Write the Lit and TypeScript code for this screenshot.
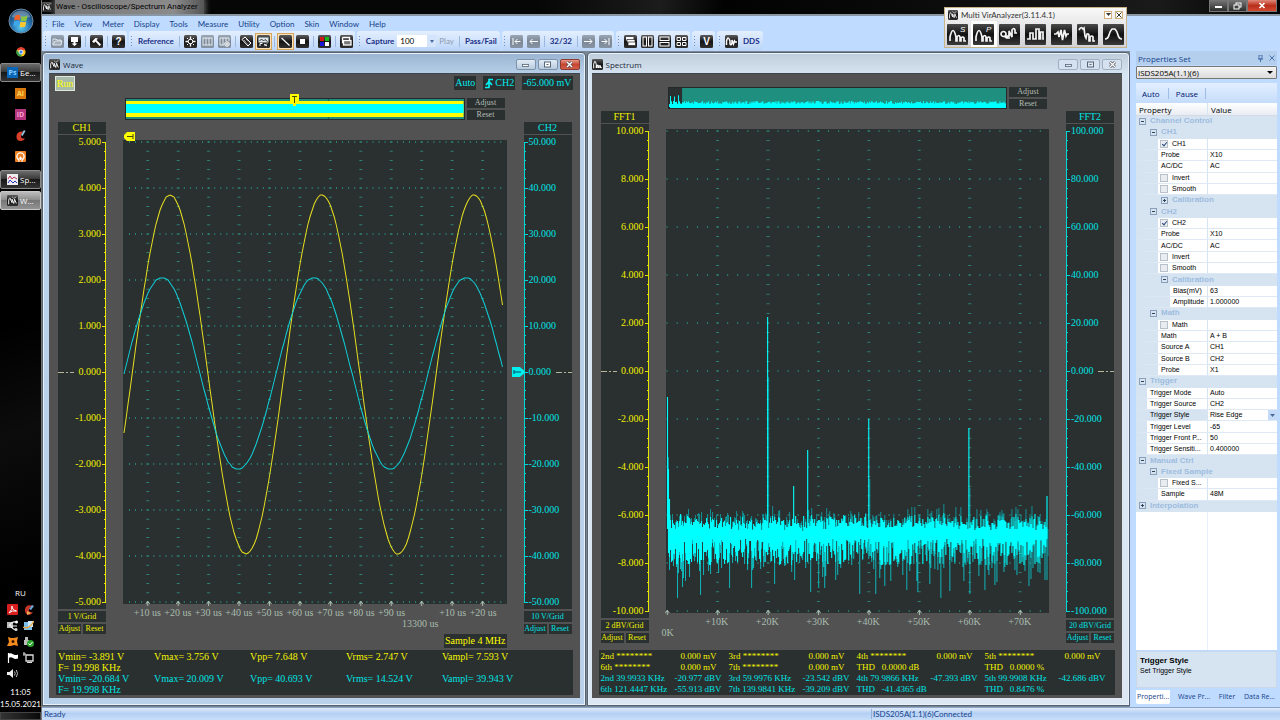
import { LitElement, html, svg, css, nothing } from "lit";
import { customElement, property } from "lit/decorators.js";
import { classMap } from "lit/directives/class-map.js";

/* ---------- shared drawing helpers ---------- */

const glyphs: Record<string, unknown> = {
  open: svg`<path d="M2 4h3l1 1h4v2M2 4v6h8l1-4H4l-2 4" fill="#d6dde6" fill-opacity=".45" stroke="#dfe6ee"/>`,
  save: svg`<rect x="3" y="2" width="7" height="5" fill="#fff"/><path d="M5.500 7h2v1.500h2L6.500 11 3.500 8.500h2z" fill="#fff"/>`,
  hammer: svg`<path d="M2 6.500L5.500 3 8 3.500 6.500 5 11 9.500 9.500 11 5.500 6.500 4 8z" fill="#fff"/>`,
  help: svg`<text x="6.500" y="10" text-anchor="middle" font-size="10" font-weight="700" font-family="Liberation Sans" fill="#fff">?</text>`,
  target: svg`<circle cx="6.500" cy="6.500" r="2.300" fill="none" stroke="#fff"/><path d="M6.500 1.500v3M6.500 8.500v3M1.500 6.500h3M8.500 6.500h3" stroke="#fff" stroke-width="1.300"/><path d="M3 3l1 1M10 3L9 4M3 10l1-1M10 10L9 9" stroke="#fff"/>`,
  bars: svg`<rect x="2" y="3" width="9" height="7" fill="none" stroke="#e8edf3"/><path d="M5 3v7M8 3v7" stroke="#e8edf3"/>`,
  barsPlus: svg`<path d="M8 3v3M5 3v7M2 3h9v3M2 3v7h4" fill="none" stroke="#e8edf3"/><circle cx="9" cy="9" r="2.300" fill="none" stroke="#fff"/><path d="M9 7.500v3M7.500 9h3" stroke="#fff"/>`,
  tag: svg`<path d="M2 4.500L5 2l6 6-3 3z" fill="none" stroke="#fff"/><path d="M4 5l4 4.500M6 4l4 4.500" stroke="#fff" stroke-width=".8" stroke-dasharray="1 .7"/>`,
  picture: svg`<path d="M1.500 2.500h10v5h-10z" fill="#dfe8ee"/><path d="M2.500 6l2-2 2 2 1.500-1.500L10.500 6.500" fill="none" stroke="#333"/><path d="M3 11V8.500h2.500M7 9l3 2M7.500 11L10 8.500" fill="none" stroke="#fff"/>`,
  line: svg`<path d="M2.500 3l8 7.500" stroke="#fff" stroke-width="1.100"/>`,
  stop: svg`<rect x="4" y="4" width="5" height="5" fill="#fff"/>`,
  palette: svg`<rect x="2" y="2" width="4" height="4" fill="#d01818"/><rect x="7" y="2" width="4" height="4" fill="#18b818"/><rect x="2" y="7" width="4" height="4" fill="#1818d8"/><rect x="7" y="7" width="4" height="4" fill="#fff"/>`,
  windows: svg`<path d="M2.500 2.500h7v3M2.500 2.500v5h2" fill="none" stroke="#fff" stroke-width="1.300"/><rect x="3.500" y="5.500" width="7.500" height="4.500" fill="#777" stroke="#fff" stroke-width="1.300"/>`,
  first: svg`<path d="M3 3v7M10.500 6.500H5M7.500 4L5 6.500 7.500 9" fill="none" stroke="#fff"/>`,
  prev: svg`<path d="M11 6.500H3M5.500 4L3 6.500 5.500 9" fill="none" stroke="#fff"/>`,
  next: svg`<path d="M2 6.500h8M7.500 4L10 6.500 7.500 9" fill="none" stroke="#fff"/>`,
  last: svg`<path d="M10 3v7M2.500 6.500H8M5.500 4L8 6.500 5.500 9" fill="none" stroke="#fff"/>`,
  cascade: svg`<rect x="2" y="2" width="7.500" height="3.500" fill="#fff"/><rect x="3" y="4.500" width="8" height="3" fill="#fff" stroke="#222" stroke-width=".7"/><rect x="4" y="7" width="7.500" height="3.500" fill="#fff" stroke="#222" stroke-width=".7"/>`,
  columns: svg`<rect x="2" y="2" width="3.500" height="9" fill="none" stroke="#fff"/><rect x="7.500" y="2" width="3.500" height="9" fill="none" stroke="#fff"/>`,
  rows: svg`<rect x="2" y="2" width="9" height="3.500" fill="none" stroke="#fff"/><rect x="2" y="7.500" width="9" height="3.500" fill="none" stroke="#fff"/>`,
  quad: svg`<path d="M2 2.500h3.500v3H2zM7.500 2.500H11v3H7.500zM2 7.500h3.500v3H2zM7.500 7.500H11v3H7.500z" fill="none" stroke="#fff"/>`,
  volt: svg`<text x="6.500" y="10" text-anchor="middle" font-size="10" font-weight="700" font-family="Liberation Sans" fill="#fff">V</text>`,
  dds: svg`<path d="M1.500 10V6Q3 0 5 6v3q1 2 2-1V5l1.500 4 1-3 .7 1H12" fill="none" stroke="#fff" stroke-width="1.500"/>`,
  wave: svg`<path d="M2 11V6Q3.500 1 4.500 6L6 9V5l2 5 1-5 2 5" fill="none" stroke="#fff" stroke-width="1.100"/><path d="M6 2l2 2 3-2" fill="none" stroke="#ccc"/>`,
  spectrum: svg`<path d="M2 11V6Q3.500 0 5 6v4h1V8q1-2 1.500 0v2h1V8.500q1-1.500 1.500 0V10h1.500" fill="none" stroke="#fff" stroke-width="1.200"/>`,
};

const tile = (name: string, size = 13, dim = false) => html`
  <svg width=${size} height=${size} viewBox="0 0 13 13" aria-hidden="true">
    <defs>
      <linearGradient id=${dim ? "td" : "tb"} x1="0" y1="0" x2="0" y2="1">
        <stop offset="0" stop-color=${dim ? "#9aa6b4" : "#5c5c5c"} />
        <stop offset=".5" stop-color=${dim ? "#7c8896" : "#161616"} />
        <stop offset="1" stop-color=${dim ? "#8794a4" : "#303030"} />
      </linearGradient>
    </defs>
    <rect width="13" height="13" rx="1.500" fill="url(#${dim ? "td" : "tb"})" />
    ${glyphs[name]}
  </svg>`;

/* Small deterministic generator so that the noise floor is stable. */
const randomSource = (seed: number) => () => {
  seed = (seed * 1664525 + 1013904223) >>> 0;
  return seed / 4294967296;
};

/* ---------- task bar ---------- */

@customElement("task-bar")
class TaskBar extends LitElement {
  static styles = css`
    :host {
      display: flex; flex-direction: column; width: 41px; color: #fff;
      background: linear-gradient(160deg, #000 0 45%, #0c0c0c 60%, #000 80%);
      font: 8px "Open Sans", sans-serif;
    }
    button { all: unset; box-sizing: border-box; display: flex; align-items: center; }
    .orb { height: 41px; justify-content: center; }
    .icon { height: 21px; justify-content: center; }
    .task {
      height: 19px; margin: 1px 0; padding-left: 6px; gap: 2px; overflow: hidden; white-space: nowrap;
      border: 1px solid #8a8a8a; border-radius: 2px;
      background: linear-gradient(#6c6c6c, #3b3b3b 45%, #181818 50%, #333);
    }
    .near { margin-top: 3px; }
    .on { background: linear-gradient(#bdbdbd, #8f8f8f 45%, #777 50%, #939393); border-color: #c8c8c8; }
    .spacer { flex: 1; }
    .lang, .clock { text-align: center; line-height: 12px; }
    .clock { font-family: Lato, sans-serif; }
    .tray { display: grid; grid-template-columns: 16px 16px; justify-content: center; row-gap: 5px; padding: 5px 0 7px; }
    .tray svg { display: block; margin: auto; }
    .peek { height: 8px; margin-top: 2px; border: 1px solid #444; background: linear-gradient(90deg, #333, #0a0a0a); }
  `;
  private tray() {
    return [
      svg`<rect width="11" height="11" rx="1" fill="#d81e1e"/><path d="M2 9Q6 5 5 2q0 4 4.500 5Q5 6 2 9" fill="none" stroke="#fff"/>`,
      svg`<path d="M9 1.500Q3 0 2 5t4 6q3-.5 4-3-3 1-4-1t3-5.500" fill="#c8362a"/><path d="M6 5l3-4 2 1-3 4z" fill="#6fa7d8"/><path d="M4 7l4 2-4 2z" fill="#e8b04a"/>`,
      svg`<path d="M0 2h6v6H0z" fill="#bbb"/><path d="M2 6q3-5 7-4M4 6h6M3 5q2 4 6 5" fill="none" stroke="#eee" stroke-width="1.200"/><circle cx="9.500" cy="2" r="1.500" fill="#fff"/><circle cx="9" cy="9.500" r="1.500" fill="#ddd"/>`,
      svg`<rect x="1" y="2" width="8" height="8" fill="#7fc0ee"/><path d="M5 1h5v6H5z" fill="#cfe9fb"/><path d="M0 7q6 3 11-6" fill="none" stroke="#f0a030" stroke-width="1.300"/>`,
      svg`<path d="M1 1l3 1 3 0 4-1-1 4 1 5-4-1-3 1-4 0 2-4z" fill="#f58a1e"/><circle cx="6" cy="5.500" r="1.500" fill="#3a1800"/>`,
      svg`<path d="M2 1h3v3h1v5H1V4h1z" fill="#bbb"/><circle cx="7.500" cy="7.500" r="3.500" fill="#2aa52a"/><path d="M5.500 7.500L7 9l2.500-3" fill="none" stroke="#fff"/>`,
      svg`<path d="M1.500 1v10" stroke="#fff" stroke-width="1.200"/><path d="M2 1.500q2-1 4 .8 2 1.500 5 .2v4q-3 1-5-.5-2-1.200-4-.3z" fill="#fff"/>`,
      svg`<path d="M3 3h7v6H3z" fill="none" stroke="#ddd" stroke-width="1.300"/><path d="M1 0v4M0 2h3M4 10.500h5" stroke="#ddd"/>`,
      svg`<path d="M0 4h2.500L6 1v9L2.500 7H0z" fill="#eee"/><path d="M7.500 3.500q1.500 2 0 4M9.300 2q2.500 3.500 0 7" fill="none" stroke="#bbb"/>`,
    ];
  }
  private app(label: string, fill: string, ink: string) {
    return html`<svg width="11" height="11" viewBox="0 0 11 11" aria-hidden="true">
      <rect width="11" height="11" fill=${fill} />
      <text x="5.500" y="8" text-anchor="middle" font-size="7" font-weight="700" font-family="Open Sans" fill=${ink}>${label}</text></svg>`;
  }
  render() {
    return html`
      <button class="orb" aria-label="Start">
        <svg width="26" height="26" viewBox="0 0 26 26">
          <defs><radialGradient id="o" cx=".5" cy=".75" r=".7">
            <stop offset="0" stop-color="#5fd0f0" /><stop offset=".5" stop-color="#2a78b8" /><stop offset="1" stop-color="#173a62" />
          </radialGradient></defs>
          <circle cx="13" cy="13" r="12" fill="url(#o)" stroke="#6d8ba4" />
          <path d="M3.500 9Q6 2.500 13 2.500T22.500 9Q13 12 3.500 9" fill="#fff" opacity=".3" />
          <path d="M7 8q3-2 5.500-.5l-.8 5Q9 11 6 12.500z" fill="#f0642c" />
          <path d="M13.500 8q3 1.300 6-.5l-1 5q-3 1.500-5.800 0z" fill="#8cc63e" />
          <path d="M6 13.500q3-1.500 5.600 0l-.8 5q-3-1.500-5.500 0z" fill="#3fa8e8" />
          <path d="M12.500 13.500q3 1.500 5.800 0l-1 5q-3 1.500-5.700 0z" fill="#fdc82f" />
        </svg>
      </button>
      <button class="icon" aria-label="Browser">
        <svg width="10" height="10" viewBox="0 0 12 12">
          <circle cx="6" cy="6" r="5.500" fill="#fbc21c" />
          <path d="M1 3.500A5.500 5.500 0 0 1 11.200 4H6z" fill="#e33b2e" />
          <path d="M1 3.500A5.500 5.500 0 0 0 5.500 11.500L8 7.500 4 7z" fill="#2ca24c" />
          <circle cx="6" cy="6" r="2.400" fill="#4285f4" stroke="#fff" />
        </svg>
      </button>
      <button class="task">${this.app("Ps", "#0a67b8", "#8fd0ff")}<span>Бе...</span></button>
      <button class="icon" aria-label="Illustrator">${this.app("Ai", "#d9780c", "#ffd65a")}</button>
      <button class="icon" aria-label="InDesign">${this.app("ID", "#b3347c", "#ff9fd0")}</button>
      <button class="icon" aria-label="Cleaner">
        <svg width="11" height="11" viewBox="0 0 11 11"><path d="M8 1.500Q2 1 1.500 6t4.500 5q3-.2 4-2.500-3.500.5-4-1.500T8 1.500" fill="#d9402c" /><path d="M6 5l3-5 1.500 1L7.500 6z" fill="#9cc4e4" /></svg>
      </button>
      <button class="icon" aria-label="Monitor">
        <svg width="11" height="11" viewBox="0 0 11 11"><rect width="11" height="11" rx="1" fill="#f08020" /><circle cx="5.500" cy="5.500" r="3.600" fill="none" stroke="#fff" stroke-width="1.400" /><path d="M5.500 5.500V9M4 11V7h3v4" stroke="#fff" fill="#f08020" /></svg>
      </button>
      <button class="task near">
        <svg width="11" height="11" viewBox="0 0 11 11"><rect width="11" height="11" fill="#eee" /><path d="M1 5l2-3 2 3 2-2 3 2" fill="none" stroke="#c03060" /><path d="M1 9l2-3 3 3 2-2 2 2" fill="none" stroke="#3030c0" /></svg>
        <span>Sp...</span>
      </button>
      <button class="task on">${tile("wave", 11)}<span>W...</span></button>
      <div class="spacer"></div>
      <div class="lang">RU</div>
      <div class="tray">${this.tray().map((g) => html`<svg width="11" height="11" viewBox="0 0 11 11" aria-hidden="true">${g}</svg>`)}</div>
      <div class="clock">11:05<br />15.05.2021</div>
      <button class="peek" aria-label="Show desktop"></button>
    `;
  }
}

/* ---------- plots ---------- */

const WAVE_W = 383, WAVE_H = 464, FFT_H = 484;

function gridDots(x0: number, dx: number, cols: number, sub: number, dy: number, h: number) {
  let d = "";
  for (let r = 0; r <= 10; r++) {
    for (let x = x0 - dx; x < WAVE_W - 4; x += dx / sub) {
      if (x > 1) d += `M${x.toFixed(1)} ${2 + r * dy - 1}v2`;
    }
  }
  for (let c = 0; c < cols; c++) {
    for (let y = 2; y < h; y += dy / 5) d += `M${(x0 + c * dx - 1.5).toFixed(1)} ${y.toFixed(1)}h3`;
  }
  return d;
}

function carets(x0: number, dx: number, n: number, h: number) {
  let d = "";
  for (let i = 0; i < n; i++) d += `M${x0 + i * dx - 2} ${h}l2 -2.500l2 2.500M${x0 + i * dx} ${h - 3}v5`;
  return d;
}

function sinePath(peak: number, mid: number, amp: number) {
  let d = "";
  for (let x = 1; x <= 379; x += 2) {
    const y = Math.round(mid - amp * Math.cos(((x - peak) / 151.8) * 2 * Math.PI));
    d += `${d ? "L" : "M"}${x} ${y}`;
  }
  return d;
}

const spikes: [number, number][] = [[1, 268], [101, 188], [127, 357], [141, 321], [202, 290], [302, 299], [380, 367]];
const drops: [number, number][] = [
  [11, 469], [34, 466], [63, 459], [85, 459], [128, 451], [144, 463], [158, 459], [193, 465],
  [209, 465], [240, 461], [251, 463], [274, 469], [318, 461], [380, 451], [16, 458], [171, 446], [297, 452], [350, 446],
];

function noise() {
  const rnd = randomSource(77);
  let bright = "", mid = "", faint = "";
  for (let i = 2; i <= 380; i++) {
    const top = 384 + (rnd() + rnd()) * 9, bottom = 410 + rnd() * 26;
    bright += `M${i}.5 ${top.toFixed(0)}V${bottom.toFixed(0)}`;
    if (rnd() > 0.4) faint += `M${i}.5 ${(top - rnd() * 10).toFixed(0)}V${top.toFixed(0)}`;
    if (rnd() > 0.5) mid += `M${i}.5 ${bottom.toFixed(0)}V${(bottom + rnd() * rnd() * 34).toFixed(0)}`;
  }
  for (const [x, y] of drops) mid += `M${x}.5 400V${y}`;
  for (const [x, y] of spikes) {
    bright += `M${x}.5 ${y}V400`;
    faint += `M${x + 1}.5 ${y + 60}V400`;
  }
  bright += "M2.500 340V420M3.500 370V420";
  return { bright, mid, faint };
}

function overviewNoise() {
  const rnd = randomSource(9);
  let d = "";
  for (let x = 1; x < 336; x++) {
    const peak = x < 12 && x % 4 === 1 ? 7 + rnd() * 4 : 13 + rnd() * 3;
    d += `M${x}.5 20V${peak.toFixed(1)}`;
  }
  return d;
}

interface ScopeSpec {
  kind: "wave" | "fft";
  title: string;
  left: { name: string; unit: string; labels: string[] };
  right: { name: string; unit: string; labels: string[] };
  ticks: string[];
  offset: { text: string; column: number };
}

@customElement("scope-window")
class ScopeWindow extends LitElement {
  @property({ attribute: false }) spec!: ScopeSpec;

  static styles = css`
    * { box-sizing: border-box; }
    :host {
      flex: 1 1 0; min-width: 0; display: flex; flex-direction: column;
      padding: 0 5px 7px 6px; border: 1px solid #55616e; border-radius: 4px 4px 0 0;
      background: linear-gradient(#99b4d1, #b9d1ea 22px, #b9d1ea);
      box-shadow: inset 0 0 0 1px #e8f2fc;
    }
    :host(.idle) { background: linear-gradient(#bfcddb, #d7e4f2 22px, #dce7f3); padding: 0 7px 7px 4px; }
    button { all: unset; box-sizing: border-box; text-align: center; }
    .title { display: flex; align-items: center; height: 20px; gap: 2px; padding-top: 2px; font: 8px "Open Sans", sans-serif; color: #1e2a36; }
    .title h2 { flex: 1; margin: 0; padding-left: 1px; font: inherit; }
    .ctl { width: 20px; height: 11px; border: 1px solid #7d92a8; border-radius: 2px; background: linear-gradient(#e2ecf6, #b8cadd); display: grid; place-items: center; }
    .ctl svg { display: block; }
    .close { background: linear-gradient(#e79a8c, #c8452f 50%, #d0604c); border-color: #8a3a30; }
    :host(.idle) .ctl { background: #d5e1ee; border-color: #9fb0c2; }
    .screen {
      flex: 1; min-height: 0; display: flex; flex-direction: column; padding: 0 7px 3px;
      background: #525252; border-top: 1px solid #3c4650; color: #ff0; font: 10px "Liberation Serif", serif;
    }
    .box { background: #2a2f30; }
    .top { height: 24px; display: flex; align-items: flex-start; gap: 7px; color: #00eaea; padding-top: 2px; }
    .run { border: 1px solid #dfe8df; background: #a9bba9; color: #ff0; width: 20px; height: 15px; line-height: 13px; margin-right: auto; margin-left: -1px; }
    .chip { height: 14px; line-height: 14px; padding: 0 1px; display: flex; align-items: center; gap: 1px; }
    .lead { height: 13px; }
    .over { display: flex; gap: 2px; height: 22px; padding: 0 68px 0 69px; }
    .strip { position: relative; flex: 1; border: 1px solid #23292a; background: #1f8f80; }
    .strip svg { display: block; width: 100%; height: 100%; }
    .pair { display: flex; flex-direction: column; gap: 2px; width: 38px; }
    .pair button { height: 10px; line-height: 10px; background: #2a2f30; color: #b4beb4; font-size: 8px; }
    .flag { position: absolute; }
    .strip .flag { left: 164px; top: -5px; width: 9px; height: 12px; }
    .body { flex: 1; min-height: 0; display: grid; grid-template-columns: 48px minmax(0, 1fr) 48px; column-gap: 17px; padding: 2px 1px 0 2px; }
    .axis { display: flex; flex-direction: column; min-height: 0; color: #f0f000; }
    .axis.r { color: #00e4e4; }
    .name { height: 12px; line-height: 12px; text-align: center; margin-bottom: 1px; }
    .scale { position: relative; flex: 1; min-height: 0; display: flex; flex-direction: column; justify-content: space-between; line-height: 14px; text-align: right; padding-right: 5px; }
    .r .scale { text-align: left; padding: 0 0 0 5px; }
    .rule { position: absolute; top: 0; right: 0; width: 4px; height: 100%; }
    .r .rule { right: auto; left: 0; }
    .zero { position: absolute; left: 0; top: 50%; width: 16px; height: 1px; background: linear-gradient(90deg, #b5b59a 0 6px, transparent 6px 8px, #b5b59a 8px 10px, transparent 10px 12px, #b5b59a 12px); }
    .r .zero { left: auto; right: 0; }
    .unit { height: 11px; line-height: 11px; text-align: center; margin: 2px 0; font-size: 8px; white-space: nowrap; }
    .acts { display: grid; grid-template-columns: 1fr 1fr; gap: 2px; }
    .acts button { height: 10px; line-height: 10px; font-size: 8px; background: #2a2f30; }
    .mid { display: flex; flex-direction: column; min-height: 0; padding-top: 18px; }
    .plot { position: relative; flex: 1; min-height: 0; }
    .plot > .graph { display: block; width: 100%; height: 100%; position: absolute; overflow: visible; }
    .tl { left: 1px; top: -8px; }
    .tr { right: -17px; top: 50%; margin-top: -5px; }
    .xs { height: 30px; padding-top: 3px; color: #a9bcae; line-height: 11px; }
    .ticks { display: grid; text-align: center; white-space: nowrap; }
    .wave .ticks { grid-template-columns: repeat(12, 1fr); padding: 0 8px 0 9px; }
    .fft .ticks { grid-template-columns: repeat(7, 1fr); padding: 0 4px 0 26px; }
    .origin { margin-left: -4px; }
    .wide { justify-self: center; }
    .sample { align-self: flex-end; margin: 0 66px 2px 0; height: 14px; line-height: 14px; padding: 0 1px; white-space: nowrap; }
    .info { display: grid; height: 45px; padding: 1px 0 0 2px; align-content: start; line-height: 11px; white-space: pre; color: #00e4e4; }
    .info.w { grid-template-columns: repeat(5, 96px); }
    .info.f { grid-template-columns: repeat(4, 128px); margin-top: 7px; font-size: 9px; }
    .info .y { color: #f4f400; }
    .cells { display: flex; justify-content: space-between; padding-right: 7px; }
    .cells.y { padding-right: 12px; }
  `;

  private axis(side: "l" | "r") {
    const fft = this.spec.kind === "fft";
    const a = side === "l" ? this.spec.left : this.spec.right;
    const step = fft ? 48 : 46;
    const h = step * 10 + 14;
    const color = side === "l" ? "#e6e600" : "#00d8d8";
    let d = `M${side === "l" ? 3.5 : 0.5} 7V${h - 7}`;
    for (let i = 0; i <= 50; i++) {
      const y = (7 + (i * step) / 5).toFixed(1);
      const len = i % 5 ? 2 : 4;
      d += side === "l" ? `M${4 - len} ${y}H4` : `M0 ${y}H${len}`;
    }
    return html`<section class="axis ${side}">
      <div class="name box">${a.name}</div>
      <div class="scale box">
        ${a.labels.map((t) => html`<span>${t}</span>`)}
        <svg class="rule" viewBox="0 0 4 ${h}" preserveAspectRatio="none" aria-hidden="true">
          <path d=${d} stroke=${color} shape-rendering="crispEdges" />
        </svg>
        <i class="zero"></i>
      </div>
      <div class="unit box">${a.unit}</div>
      <div class="acts"><button>Adjust</button><button>Reset</button></div>
    </section>`;
  }

  private graph() {
    if (this.spec.kind === "wave") {
      return html`<svg class="graph" viewBox="0 0 ${WAVE_W} ${WAVE_H}" preserveAspectRatio="none">
        <path d=${gridDots(24.7, 30.4, 12, 5, 46, WAVE_H)} stroke="#2c8074" />
        <path d=${carets(24.7, 30.4, 12, WAVE_H)} stroke="#a9bcae" fill="none" />
        <path d=${sinePath(47, 234.5, 179.5)} stroke="#e8e020" fill="none" />
        <path d=${sinePath(39, 233.5, 96)} stroke="#10d0d8" fill="none" />
      </svg>`;
    }
    const n = noise();
    return html`<svg class="graph" viewBox="0 0 ${WAVE_W} ${FFT_H}" preserveAspectRatio="none">
      <path d=${gridDots(51.5, 50.36, 7, 5, 48, FFT_H)} stroke="#2c8074" />
      <path d=${carets(1.3, 50.36, 8, FFT_H)} stroke="#a9bcae" fill="none" />
      <path d=${n.faint} stroke="#128f93" />
      <path d=${n.mid} stroke="#10b4b8" />
      <path d=${n.bright} stroke="#00ffff" stroke-width="1.100" />
    </svg>`;
  }

  private strip() {
    return this.spec.kind === "wave"
      ? html`<div class="strip">
          <svg viewBox="0 0 336 20" preserveAspectRatio="none" aria-hidden="true">
            <rect y="2" width="336" height="16" fill="#ffff00" /><rect y="5" width="336" height="9" fill="#00ffff" />
            <path d="M201.500 0v2M201.500 18v2" stroke="#1b5f50" />
          </svg>
          <svg class="flag" viewBox="0 0 9 12"><path d="M0 0h9v9H6v3H3V9H0z" fill="#ffff00" /><path d="M2 2.500h5M4.500 2.500V9" stroke="#4a4a00" /></svg>
        </div>`
      : html`<div class="strip">
          <svg viewBox="0 0 336 20" preserveAspectRatio="none" aria-hidden="true">
            <rect width="13" height="20" fill="#2a2f30" /><path d=${overviewNoise()} stroke="#00ffff" /><path d="M0 16v3h336v-3z" fill="#00ffff" />
          </svg>
        </div>`;
  }

  private info() {
    if (this.spec.kind === "wave") {
      const a = ["Vmin= -3.891 V", "Vmax= 3.756 V", "Vpp= 7.648 V", "Vrms= 2.747 V", "Vampl= 7.593 V", "F= 19.998 KHz", "", "", "", ""];
      const b = ["Vmin= -20.684 V", "Vmax= 20.009 V", "Vpp= 40.693 V", "Vrms= 14.524 V", "Vampl= 39.943 V", "F= 19.998 KHz"];
      return html`<div class="info w box">${a.map((t) => html`<span class="y">${t}</span>`)}${b.map((t) => html`<span>${t}</span>`)}</div>`;
    }
    const stars = "********";
    const y: [string, string][] = [
      [`2nd ${stars}`, "0.000 mV"], [`3rd ${stars}`, "0.000 mV"], [`4th ${stars}`, "0.000 mV"], [`5th ${stars}`, "0.000 mV"],
      [`6th ${stars}`, "0.000 mV"], [`7th ${stars}`, "0.000 mV"], ["THD   0.0000 dB", ""], ["THD   0.0000 %", ""],
    ];
    const c: [string, string][] = [
      ["2nd 39.9933 KHz", "-20.977 dBV"], ["3rd 59.9976 KHz", "-23.542 dBV"], ["4th 79.9866 KHz", "-47.393 dBV"], ["5th 99.9908 KHz", "-42.686 dBV"],
      ["6th 121.4447 KHz", "-55.913 dBV"], ["7th 139.9841 KHz", "-39.209 dBV"], ["THD   -41.4365 dB", ""], ["THD   0.8476 %", ""],
    ];
    return html`<div class="info f box">
      ${y.map(([k, v]) => html`<div class="cells y"><span>${k}</span><span>${v}</span></div>`)}
      ${c.map(([k, v]) => html`<div class="cells"><span>${k}</span><span>${v}</span></div>`)}
    </div>`;
  }

  render() {
    const s = this.spec;
    const wave = s.kind === "wave";
    const ink = wave ? "#fff" : "#dfe8f2";
    return html`
      <header class="title">
        ${tile(wave ? "wave" : "spectrum", 11)}
        <h2>${s.title}</h2>
        <button class="ctl" aria-label="Minimize"><svg width="9" height="7"><rect x="1.500" y="3.500" width="6" height="2" fill=${ink} stroke="#56677a" stroke-width=".8" /></svg></button>
        <button class="ctl" aria-label="Restore"><svg width="9" height="7"><rect x="1.500" y="1" width="6" height="5" fill=${ink} stroke="#56677a" /><rect x="3.500" y="3" width="2" height="1" fill="#56677a" /></svg></button>
        <button class=${classMap({ ctl: true, close: wave })} aria-label="Close"><svg width="9" height="7"><path d="M2 1l5 5M7 1L2 6" stroke="#4a4a55" stroke-width="2.600" /><path d="M2 1l5 5M7 1L2 6" stroke="#fff" stroke-width="1.400" /></svg></button>
      </header>
      <div class="screen">
        ${wave
          ? html`<div class="top">
              <button class="run">Run</button>
              <span class="chip box">Auto</span>
              <span class="chip box"><svg width="10" height="11" viewBox="0 0 10 11"><path d="M1 9.500h4v-8H9M2 7l3-3.500 3 3.500" fill="none" stroke="#00f0f0" stroke-width="1.700" /></svg>CH2</span>
              <span class="chip box">-65.000 mV</span>
            </div>`
          : html`<div class="lead"></div>`}
        <div class="over">${this.strip()}<div class="pair"><button>Adjust</button><button>Reset</button></div></div>
        <div class="body ${s.kind}">
          ${this.axis("l")}
          <div class="mid">
            <div class="plot box">
              ${this.graph()}
              ${wave
                ? html`<svg class="flag tl" width="11" height="9"><path d="M3 0h8v9H3L0 6V3z" fill="#ffff00" /><path d="M3 4.500h6M9 2v5" stroke="#4a4a00" /></svg>
                    <svg class="flag tr" width="12" height="10"><path d="M0 0h8l4 3.500v3L8 10H0z" fill="#00f0f0" /><path d="M2 5h7M2 3v4" stroke="#046" /></svg>`
                : nothing}
            </div>
            <div class="xs">
              <div class="ticks">${s.ticks.map((t) => html`<span>${t}</span>`)}</div>
              ${wave
                ? html`<div class="ticks"><span class="wide" style="grid-column:${s.offset.column}">${s.offset.text}</span></div>`
                : html`<div class="origin">${s.offset.text}</div>`}
            </div>
          </div>
          ${this.axis("r")}
        </div>
        ${wave ? html`<div class="sample box">Sample 4 MHz</div>` : nothing}
        ${this.info()}
      </div>
    `;
  }
}

/* ---------- property panel ---------- */

type Row = { depth: number; name: string; value?: string; group?: "open" | "closed"; check?: boolean; active?: boolean };

const channel = (name: string): Row[] => [
  { depth: 1, name, group: "open" },
  { depth: 2, name, check: true },
  { depth: 2, name: "Probe", value: "X10" },
  { depth: 2, name: "AC/DC", value: "AC" },
  { depth: 2, name: "Invert", check: false },
  { depth: 2, name: "Smooth", check: false },
];

const rows: Row[] = [
  { depth: 0, name: "Channel Control", group: "open" },
  ...channel("CH1"),
  { depth: 2, name: "Calibration", group: "closed" },
  ...channel("CH2"),
  { depth: 2, name: "Calibration", group: "open" },
  { depth: 3, name: "Bias(mV)", value: "63" },
  { depth: 3, name: "Amplitude", value: "1.000000" },
  { depth: 1, name: "Math", group: "open" },
  { depth: 2, name: "Math", check: false },
  { depth: 2, name: "Math", value: "A + B" },
  { depth: 2, name: "Source A", value: "CH1" },
  { depth: 2, name: "Source B", value: "CH2" },
  { depth: 2, name: "Probe", value: "X1" },
  { depth: 0, name: "Trigger", group: "open" },
  { depth: 1, name: "Trigger Mode", value: "Auto" },
  { depth: 1, name: "Trigger Source", value: "CH2" },
  { depth: 1, name: "Trigger Style", value: "Rise Edge", active: true },
  { depth: 1, name: "Trigger Level", value: "-65" },
  { depth: 1, name: "Trigger Front P...", value: "50" },
  { depth: 1, name: "Trigger Sensiti...", value: "0.400000" },
  { depth: 0, name: "Manual Ctrl", group: "open" },
  { depth: 1, name: "Fixed Sample", group: "open" },
  { depth: 2, name: "Fixed S...", check: false },
  { depth: 2, name: "Sample", value: "48M" },
  { depth: 0, name: "Interpolation", group: "closed" },
];

@customElement("property-panel")
class PropertyPanel extends LitElement {
  static styles = css`
    * { box-sizing: border-box; }
    :host { display: flex; flex-direction: column; width: 150px; padding: 0 3px 0 6px; background: #bfdbff; font: 7px "Liberation Sans", sans-serif; color: #000; }
    header { display: flex; align-items: center; height: 14px; padding: 0 2px; gap: 6px; background: #b4cfee; color: #15428b; font: 8px "Open Sans", sans-serif; }
    header h2 { flex: 1; margin: 0; font: inherit; }
    button, select { font: inherit; }
    .device { height: 13px; margin: 1px 0 4px; padding: 0 1px; border: 1px solid #777; border-radius: 1px; appearance: none; color: #000; font: 8px "Open Sans", sans-serif; line-height: 11px; width: 100%; background: linear-gradient(#f5f5f5, #dcdcdc); }
    .pick { position: relative; display: flex; }
    .pick i { position: absolute; right: 4px; top: 6px; border: 3px solid transparent; border-top-color: #000; border-bottom: 0; }
    .bar { display: flex; align-items: center; height: 20px; background: linear-gradient(#e3efff, #c4dcfb); font: 8px "Open Sans", sans-serif; }
    .bar button { all: unset; color: #00156e; padding: 0 8px 0 6px; border-right: 1px solid #9ebce4; line-height: 11px; }
    .bar button + button { padding: 0 7px; }
    .list { flex: 1; min-height: 0; overflow: hidden; background: linear-gradient(#e8effa, #e8effa) 71px 0 / 1px 100% no-repeat #fff; }
    table { width: 100%; height: 409px; border-collapse: separate; border-spacing: 0; table-layout: fixed; }
    .prop { width: 71px; }
    th { text-align: left; font: 8px "Open Sans", sans-serif; line-height: 11px; height: 13px; padding: 0 3px; background: linear-gradient(#fff, #e8ecf2); border-bottom: 1px solid #d5dbe4; }
    th + th, td + td { border-left: 1px solid #d6e4f2; }
    td { padding: 0 2px; height: 11px; line-height: 10px; background: #fff; border-bottom: 1px solid #dfe9f5; white-space: nowrap; overflow: hidden; }
    .group td { background: #d6e4f2; color: #9dbcde; font-size: 8px; border-color: #d6e4f2; font-weight: 700; }
    .d0 { padding-left: 3px; }
    .d1 { padding-left: 3px; border-left: 11px solid #d6e4f2; }
    .d2 { padding-left: 3px; border-left: 22px solid #d6e4f2; }
    .d3 { padding-left: 3px; border-left: 34px solid #d6e4f2; }
    .active td:first-child { background: #d6e4f2; }
    .head { display: flex; align-items: center; gap: 4px; }
    .tog { all: unset; width: 5px; height: 5px; border: 1px solid #8a9fba; display: grid; place-items: center; }
    .tog svg { display: block; }
    label { display: flex; align-items: center; gap: 4px; }
    input { appearance: none; margin: 0 0 0 -1px; width: 8px; height: 8px; border: 1px solid #b8c0ca; background: #e9edf1; display: grid; place-items: center; }
    input:checked::after { content: ""; width: 2px; height: 4px; border: solid #2a4a80; border-width: 0 1px 1px 0; transform: rotate(40deg); margin-top: -1px; }
    .val { display: flex; justify-content: space-between; align-items: center; }
    .drop { all: unset; width: 9px; height: 10px; margin-right: -2px; background: #c3dbf8; display: grid; place-items: center; }
    .note { height: 37px; margin-top: 1px; border: 1px solid #c8d8ea; background: #d6e4f2; padding: 4px 3px; line-height: 10px; }
    .note b { display: block; font-size: 8px; }
    nav { display: flex; justify-content: space-between; height: 17px; margin-top: 2px; padding: 0 1px 3px 0; }
    nav button { all: unset; padding: 0 1px; color: #15428b; font: 7px "Open Sans", sans-serif; line-height: 14px; white-space: nowrap; }
    nav .sel { background: #fff; border-radius: 0 0 2px 2px; }
  `;
  private row(r: Row, i: number) {
    if (r.group) {
      return html`<tr class="group"><td colspan="2" class="d${r.depth}"><span class="head">
        <button class="tog" aria-label="Toggle ${r.name}"><svg width="5" height="5"><path d=${r.group === "open" ? "M1 2.500h3" : "M1 2.500h3M2.500 1v3"} stroke="#345" /></svg></button>${r.name}</span></td></tr>`;
    }
    return html`<tr class=${classMap({ active: !!r.active })}>
      <td class="d${r.depth}">${r.check === undefined ? r.name : html`<label for="c${i}"><input id="c${i}" type="checkbox" .checked=${r.check} />${r.name}</label>`}</td>
      <td><span class="val">${r.value ?? ""}${r.active
        ? html`<button class="drop" aria-label="Choose"><svg width="5" height="3"><path d="M0 0h5L2.500 3z" fill="#4a6a9a" /></svg></button>` : nothing}</span></td>
    </tr>`;
  }
  render() {
    return html`
      <header><h2>Properties Set</h2>
        <svg width="5" height="7"><path d="M1 0h3v4H1zM0 4h5M2.500 4v3" fill="none" stroke="#4a72aa" /></svg>
        <svg width="6" height="6"><path d="M.5 .5l5 5M5.500 .5l-5 5" stroke="#4a72aa" /></svg>
      </header>
      <div class="pick"><select class="device" aria-label="Device"><option>ISDS205A(1.1)(6)</option></select><i></i></div>
      <div class="bar"><button>Auto</button><button>Pause</button></div>
      <div class="list">
        <table>
          <thead><tr><th class="prop">Property</th><th>Value</th></tr></thead>
          <tbody>${rows.map((r, i) => this.row(r, i))}</tbody>
        </table>
      </div>
      <div class="note"><b>Trigger Style</b>Set Trigger Style</div>
      <nav><button class="sel">Properti...</button><button>Wave Pr...</button><button>Filter</button><button>Data Re...</button></nav>
    `;
  }
}

/* ---------- floating launcher ---------- */

@customElement("tool-launcher")
class ToolLauncher extends LitElement {
  static styles = css`
    :host { display: block; background: linear-gradient(#f8f8f8, #d2d2d6); border: 1px solid #c9b48a; color: #333; }
    .cap { display: flex; align-items: center; height: 13px; gap: 3px; padding: 0 3px; font: 8px Lato, sans-serif; }
    .cap span { flex: 1; }
    button { all: unset; box-sizing: border-box; display: grid; place-items: center; }
    .sm { width: 8px; height: 8px; border: 1px solid #d0b078; background: #fff; }
    .set { display: grid; grid-template-columns: repeat(7, 1fr); }
    .set button { height: 26px; }
    .set .sel { background: #fff; }
    text { font: italic 8px "Liberation Sans", sans-serif; fill: #fff; stroke: none; }
  `;
  render() {
    const art = [
      svg`<path d="M3 17V13Q6 0 9 13v4h1v-4q2-3 3 0v4h1v-3q2-2 3 0v3h2"/><text x="13" y="8">S</text>`,
      svg`<path d="M3 17V13Q6 0 9 13v4h1v-4q2-3 3 0v4h1v-3q2-2 3 0v3h2"/><text x="13" y="8">P</text>`,
      svg`<circle cx="4.500" cy="10" r="2.500"/><path d="M6 13q2 2 4-2V7l3 6V6q2-3 3 0v3h2M6 12h5M7 14h4"/>`,
      svg`<path d="M2 15h3V9h3v6h3V5h3v10h1.500V8H18v7h1"/>`,
      svg`<path d="M3 10h2l2-2 1 5 2-7 1.500 10 2-10 1.500 6 1-2h2"/>`,
      svg`<path d="M2 6q2-4 4-1l1-1 1 8 1 2 1-4q2-1 2 2v5h1v-4q2-2 3 0v4h2"/>`,
      svg`<path d="M2 15q3 0 4-4t3-6h3q2 2 3 6t4 4"/>`,
    ];
    return html`
      <div class="cap">${tile("wave", 10)}<span>Multi VirAnalyzer(3.11.4.1)</span>
        <button class="sm" aria-label="Menu"><svg width="5" height="3"><path d="M0 0h5L2.500 3z" fill="#333" /></svg></button>
        <button class="sm" aria-label="Close"><svg width="6" height="6"><path d="M.5 .5l5 5M5.500 .5l-5 5" stroke="#333" /></svg></button></div>
      <div class="set">${art.map((a, i) => html`<button class=${i === 1 ? "sel" : ""} aria-label="Tool ${i + 1}">
        <svg width="21" height="21"><defs><linearGradient id="g" x1="0" y1="0" x2="0" y2="1"><stop offset="0" stop-color="#4a4a4a" /><stop offset=".5" stop-color="#111" /><stop offset="1" stop-color="#3a3a3a" /></linearGradient></defs>
        <rect width="21" height="21" rx="1" fill="url(#g)" /><g fill="none" stroke="#f4f4f4" stroke-width="1.700">${a}</g></svg></button>`)}</div>
    `;
  }
}

/* ---------- application ---------- */

const waveSpec: ScopeSpec = {
  kind: "wave", title: "Wave",
  left: { name: "CH1", unit: "1 V/Grid", labels: [5, 4, 3, 2, 1, 0, -1, -2, -3, -4, -5].map((n) => n.toFixed(3)) },
  right: { name: "CH2", unit: "10 V/Grid", labels: [50, 40, 30, 20, 10, 0, -10, -20, -30, -40, -50].map((n) => n.toFixed(3)) },
  ticks: ["+10 us", "+20 us", "+30 us", "+40 us", "+50 us", "+60 us", "+70 us", "+80 us", "+90 us", "", "+10 us", "+20 us"],
  offset: { text: "13300 us", column: 10 },
};
const fftSpec: ScopeSpec = {
  kind: "fft", title: "Spectrum",
  left: { name: "FFT1", unit: "2 dBV/Grid", labels: [10, 8, 6, 4, 2, 0, -2, -4, -6, -8, -10].map((n) => n.toFixed(3)) },
  right: { name: "FFT2", unit: "20 dBV/Grid", labels: [100, 80, 60, 40, 20, 0, -20, -40, -60, -80, -100].map((n) => n.toFixed(3)) },
  ticks: ["+10K", "+20K", "+30K", "+40K", "+50K", "+60K", "+70K"],
  offset: { text: "0K", column: 1 },
};

@customElement("app-root")
class AppRoot extends LitElement {
  static styles = css`
    * { box-sizing: border-box; }
    :host { display: grid; grid-template-columns: 41px minmax(0, 1fr); height: 100vh; background: #000; overflow: hidden; font: 8px "Open Sans", sans-serif; }
    button { all: unset; box-sizing: border-box; }
    .app { position: relative; display: flex; flex-direction: column; min-width: 0; min-height: 0; border-left: 1px solid #777; }
    .title { display: flex; align-items: center; gap: 3px; height: 14px; color: #000; background: linear-gradient(100deg, #060606 40%, #1c1c1c 50%, #020202 55%, #0a0a0a 70%, #1a1a1a 90%, #000); }
    .title h1 { margin: 0 auto 0 0; font: 8px Roboto, sans-serif; padding: 0 6px 0 1px; line-height: 14px; background: linear-gradient(90deg, #777, #8b8b8b 80%, #555); box-shadow: 0 0 5px 2px #555; }
    .win { display: flex; align-self: flex-start; height: 12px; margin-right: 3px; }
    .win button { width: 19px; display: grid; place-items: center; border: 1px solid #777; border-top: 0; background: linear-gradient(#777, #2d2d2d); }
    .win .x { width: 30px; background: linear-gradient(#e0897a, #b8301c 50%, #d2482e); }
    .menu { display: flex; height: 17px; align-items: center; gap: 10px; padding: 0 4px 0 2px; border-top: 2px solid #8996a6; background: #bfdbff; color: #15428b; font-family: Lato, sans-serif; }
    .menu a { color: inherit; text-decoration: none; }
    .grip { width: 3px; height: 12px; margin: 0 2px 0 1px; background: radial-gradient(circle, #6b94cc 1px, transparent 1px) 0 0 / 3px 3px; }
    .menu .grip { height: 9px; margin-right: -6px; }
    .tools { display: flex; height: 20px; gap: 2px; padding-left: 1px; background: #bfdbff; color: #1a2f86; font-family: Lato, sans-serif; }
    .seg { display: flex; align-items: center; border-radius: 3px; background: linear-gradient(#e3efff, #d0e2fb 50%, #b9d4f8); }
    .btn { width: 17px; height: 17px; display: grid; place-items: center; }
    .btn svg { display: block; }
    .btn.on { border: 1px solid #d9a25a; background: #fbe3b8; }
    .sep { width: 5px; height: 11px; border-left: 1px solid #9ab8e0; margin-left: 2px; margin-right: -2px; }
    .txt { padding: 0 3px; font-weight: 700; }
    .off { color: #8d99ab; font-weight: 400; }
    .cap { width: 39px; height: 12px; appearance: none; border: 0; padding: 0 3px; color: #000; font: inherit; background: linear-gradient(#d4e5fb, #d4e5fb) 100% 0 / 9px 100% no-repeat #fff; }
    .combo { position: relative; display: flex; }
    .combo i { position: absolute; right: 2px; top: 5px; border: 2px solid transparent; border-top: 3px solid #4a6a9a; border-bottom: 0; }
    .main { flex: 1; min-height: 0; display: flex; }
    .mdi { flex: 1; min-width: 0; display: flex; gap: 1px; padding: 1px 0 1px; background: #7c8794; }
    .status { display: flex; align-items: center; height: 13px; color: #15428b; border-top: 1px solid #8aa5c8; background: linear-gradient(#dfeaf9, #b4d0f4 45%, #c8defa); padding-left: 2px; font-family: Lato, sans-serif; }
    .status span { flex: 827 1 0; }
    .status span + span { flex: 407 1 0; border-left: 1px solid #93b0d8; padding-left: 1px; }
    tool-launcher { position: absolute; right: 153px; top: 7px; width: 183px; }
  `;
  private btn(name: string, opt: { on?: boolean; dim?: boolean } = {}) {
    return html`<button class=${classMap({ btn: true, on: !!opt.on })} aria-label=${name}>${tile(name, 13, opt.dim)}</button>`;
  }
  render() {
    const sep = html`<i class="sep"></i>`;
    const grip = html`<i class="grip"></i>`;
    return html`
      <task-bar></task-bar>
      <div class="app">
        <header class="title">${tile("wave", 10)}<h1>Wave - Oscilloscope/Spectrum Analyzer</h1>
          <div class="win">
            <button aria-label="Minimize"><svg width="9" height="7"><rect x="1" y="4" width="7" height="2" fill="#fff" /></svg></button>
            <button aria-label="Restore"><svg width="9" height="8"><rect x="3" y="1" width="5" height="4" fill="none" stroke="#fff" /><rect x="1" y="3" width="5" height="4" fill="#444" stroke="#fff" /></svg></button>
            <button class="x" aria-label="Close"><svg width="8" height="7"><path d="M1.500 1l5 5M6.500 1l-5 5" stroke="#fff" stroke-width="1.700" /></svg></button>
          </div>
        </header>
        <nav class="menu">${grip}${["File", "View", "Meter", "Display", "Tools", "Measure", "Utility", "Option", "Skin", "Window", "Help"].map((m) => html`<a href="#">${m}</a>`)}</nav>
        <div class="tools">
          <div class="seg">${grip}${this.btn("open", { dim: true })}${this.btn("save")}${sep}${this.btn("hammer")}${sep}${this.btn("help")}</div>
          <div class="seg">${grip}<button class="txt">Reference</button>${sep}${this.btn("target")}${this.btn("bars", { dim: true })}${this.btn("barsPlus", { dim: true })}${sep}${this.btn("tag")}${this.btn("picture", { on: true })}${sep}${this.btn("line", { on: true })}${this.btn("stop")}${sep}${this.btn("palette")}${sep}${this.btn("windows")}</div>
          <div class="seg">${grip}<label class="txt" for="cap">Capture</label>
            <span class="combo"><select id="cap" class="cap"><option>100</option></select><i></i></span>
            <button class="txt off">Play</button>${sep}<button class="txt">Pass/Fail</button></div>
          <div class="seg">${grip}${this.btn("first", { dim: true })}${this.btn("prev", { dim: true })}${sep}<span class="txt">32/32</span>${sep}${this.btn("next", { dim: true })}${this.btn("last", { dim: true })}</div>
          <div class="seg">${grip}${this.btn("cascade")}${this.btn("columns")}${this.btn("rows")}${this.btn("quad")}</div>
          <div class="seg">${grip}${this.btn("volt")}</div>
          <div class="seg">${grip}${this.btn("dds")}<button class="txt">DDS</button></div>
        </div>
        <div class="main">
          <div class="mdi">
            <scope-window .spec=${waveSpec}></scope-window>
            <scope-window class="idle" .spec=${fftSpec}></scope-window>
          </div>
          <property-panel></property-panel>
        </div>
        <footer class="status"><span>Ready</span><span>ISDS205A(1.1)(6)Connected</span></footer>
        <tool-launcher></tool-launcher>
      </div>
    `;
  }
}
